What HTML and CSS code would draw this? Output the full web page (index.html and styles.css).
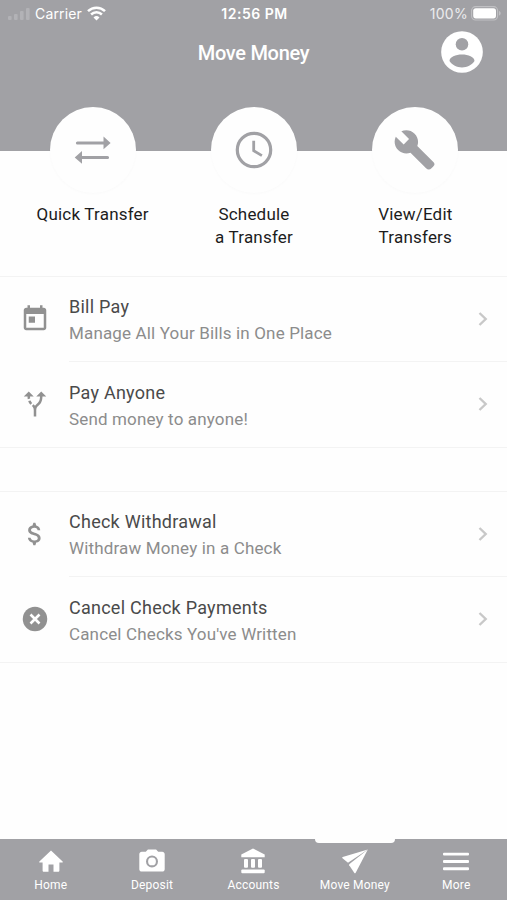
FILE: index.html
```
<!DOCTYPE html>
<html lang="en">
<head>
    <meta charset="UTF-8">
    <meta name="viewport" content="width=device-width, initial-scale=1.0">
    <title>Move Money</title>
    <link rel="stylesheet" href="styles.css">
</head>
<body>
    <div class="app">
        <header class="header">
            <div class="status-bar">
                <div class="status-left">
                    <svg class="signal" width="22" height="14" viewBox="0 0 22 14">
                        <rect x="0" y="9" width="3.6" height="4" rx="1"/>
                        <rect x="6" y="7" width="3.6" height="6" rx="1"/>
                        <rect x="12" y="4" width="3.6" height="9" rx="1"/>
                        <rect x="18" y="1" width="3.6" height="12" rx="1"/>
                    </svg>
                    <span class="carrier">Carrier</span>
                    <svg width="19" height="15" viewBox="0 0 19 15" fill="none" stroke="#fff" stroke-width="2.5">
                        <path d="M1 5.1a12.2 12.2 0 0 1 17 0"/>
                        <path d="M4.1 8.5a7.7 7.7 0 0 1 10.8 0"/>
                        <path d="M9.5 14.4L6.5 11.4a4.3 4.3 0 0 1 6 0z" fill="#fff" stroke="none"/>
                    </svg>
                </div>
                <div class="time">12:56 PM</div>
                <div class="status-right">
                    <span class="percent">100%</span>
                    <svg width="30" height="15" viewBox="0 0 30 15">
                        <rect x=".6" y=".6" width="26" height="13.4" rx="4" fill="none" stroke="#c0c0c3" stroke-width="1.1"/>
                        <rect x="2.2" y="2.2" width="22.8" height="10.2" rx="2.6" fill="#fff"/>
                        <path d="M28 5v4.6c1-.4 1.7-1.2 1.7-2.3S29 5.4 28 5z" fill="#c0c0c3"/>
                    </svg>
                </div>
            </div>
            <div class="title-bar">
                <h1>Move Money</h1>
                <svg class="profile" width="50" height="50" viewBox="0 0 24 24">
                    <circle cx="12" cy="12" r="10" fill="#fff"/>
                    <circle cx="12" cy="8.3" r="3" fill="#a1a1a5"/>
                    <path d="M12 13.2c-3 0-6 1.3-6 3.1 1.3 1.9 3.5 3.1 6 3.1s4.7-1.2 6-3.1c0-1.8-3-3.1-6-3.1z" fill="#a1a1a5"/>
                </svg>
            </div>
        </header>

        <nav class="actions">
            <a class="action">
                <span class="action-circle">
                    <svg width="38" height="28" viewBox="0 0 38 28" fill="#a1a1a5">
                        <path d="M3.500 5.400h26V.4L36.600 6.900l-7.100 6.400V8.600H3.500a1.600 1.600 0 0 1 0-3.200z"/>
                        <path d="M33.500 19.900H8v-4.900L.7 21.400 8 27.800v-4.700h25.500a1.600 1.600 0 0 0 0-3.200z"/>
                    </svg>
                </span>
                <span class="action-label">Quick Transfer</span>
            </a>
            <a class="action">
                <span class="action-circle">
                    <svg width="38" height="38" viewBox="0 0 38 38" fill="none" stroke="#a1a1a5">
                        <circle cx="19" cy="19" r="16.7" stroke-width="3.2"/>
                        <path d="M18.7 9.8v10l8.2 4.8" stroke-width="2.8"/>
                    </svg>
                </span>
                <span class="action-label">Schedule<br>a Transfer</span>
            </a>
            <a class="action">
                <span class="action-circle">
                    <svg width="43" height="43" viewBox="0.6 0.4 24 24" fill="#a1a1a5">
                        <path d="M22.7 19l-9.1-9.1c.9-2.3.4-5-1.5-6.900-2-2-5-2.400-7.400-1.300L9 6 6 9 1.600 4.700C.4 7.100.9 10.100 2.900 12.100c1.900 1.900 4.600 2.400 6.900 1.500l8.700 8.700c.9.9 2.100.9 3 0l1-1c.9-.8.9-1.600.2-2.300z"/>
                    </svg>
                </span>
                <span class="action-label">View/Edit<br>Transfers</span>
            </a>
        </nav>

        <main>
            <section class="list">
                <a class="row">
                    <svg class="row-icon" width="30" height="30" viewBox="0 0 24 24">
                        <path d="M19 3h-1V1h-2v2H8V1H6v2H5c-1.110 0-1.990.9-1.990 2L3 19c0 1.100.89 2 2 2h14c1.100 0 2-.9 2-2V5c0-1.100-.9-2-2-2zm0 16H5V8h14v11zM7 10h5v5H7v-5z"/>
                    </svg>
                    <div class="row-body">
                        <div class="row-text">
                            <div class="row-title">Bill Pay</div>
                            <div class="row-sub">Manage All Your Bills in One Place</div>
                        </div>
                        <svg class="chevron" width="10" height="16" viewBox="0 0 10 16"><path d="M1.500 2l6.200 6-6.200 6"/></svg>
                    </div>
                </a>
                <a class="row">
                    <svg class="row-icon" width="30" height="30" viewBox="0 0 24 24">
                        <path d="M9.780 11.160l-1.420 1.420c-.68-.69-1.340-1.580-1.790-2.940l1.940-.49c.32.89.77 1.500 1.270 2.010zM11 6L7 2 3 6h3.020c.02.81.08 1.540.19 2.170l1.940-.49C8.080 7.200 8.030 6.630 8.020 6H11zm10 0l-4-4-4 4h2.990c-.1 3.680-1.280 4.750-2.540 5.880-.5.44-1.010.92-1.450 1.550-.34-.49-.73-.88-1.130-1.240L9.460 13.600c.93.85 1.540 1.540 1.540 3.400v5h2v-5c0-2.020.71-2.660 1.790-3.630 1.380-1.240 3.080-2.780 3.200-7.370H21z"/>
                    </svg>
                    <div class="row-body">
                        <div class="row-text">
                            <div class="row-title">Pay Anyone</div>
                            <div class="row-sub">Send money to anyone!</div>
                        </div>
                        <svg class="chevron" width="10" height="16" viewBox="0 0 10 16"><path d="M1.500 2l6.200 6-6.200 6"/></svg>
                    </div>
                </a>
            </section>

            <section class="list">
                <a class="row">
                    <svg class="row-icon" width="30" height="30" viewBox="0 0 24 24">
                        <path d="M11.800 10.900c-2.270-.59-3-1.200-3-2.150 0-1.090 1.010-1.850 2.700-1.850 1.780 0 2.440.85 2.500 2.100h2.210c-.07-1.720-1.120-3.300-3.210-3.810L12.300 3h-1.600L10 5.160c-1.940.42-3.500 1.680-3.500 3.610 0 2.310 1.910 3.460 4.700 4.130 2.500.6 3 1.480 3 2.410 0 .69-.49 1.790-2.700 1.790-2.060 0-2.870-.92-2.980-2.100h-2.200c.12 2.190 1.760 3.420 3.680 3.830L10.700 21h1.600l.7-2.150c1.950-.37 3.500-1.500 3.500-3.550 0-2.840-2.430-3.810-4.700-4.400z"/>
                    </svg>
                    <div class="row-body">
                        <div class="row-text">
                            <div class="row-title">Check Withdrawal</div>
                            <div class="row-sub">Withdraw Money in a Check</div>
                        </div>
                        <svg class="chevron" width="10" height="16" viewBox="0 0 10 16"><path d="M1.500 2l6.200 6-6.200 6"/></svg>
                    </div>
                </a>
                <a class="row">
                    <svg class="row-icon" width="30" height="30" viewBox="0 0 24 24">
                        <circle cx="12" cy="12" r="9.800"/>
                        <path d="M8.400 8.400l7.200 7.200M15.600 8.400l-7.200 7.200" stroke="#fff" stroke-width="2.100"/>
                    </svg>
                    <div class="row-body">
                        <div class="row-text">
                            <div class="row-title">Cancel Check Payments</div>
                            <div class="row-sub">Cancel Checks You've Written</div>
                        </div>
                        <svg class="chevron" width="10" height="16" viewBox="0 0 10 16"><path d="M1.500 2l6.200 6-6.200 6"/></svg>
                    </div>
                </a>
            </section>
        </main>

        <nav class="tab-bar">
            <a class="tab">
                <svg width="28" height="28" viewBox="0 0 28 28">
                    <path d="M14 3.500L2.400 14.600c-.4.500-.2 1 .4 1H5.600v7.900c0 .8.500 1.300 1.300 1.300h4.600v-7.200h5v7.200h4.600c.8 0 1.300-.5 1.300-1.300v-7.900h2.800c.6 0 .8-.5.4-1z"/>
                </svg>
                <span>Home</span>
            </a>
            <a class="tab">
                <svg width="28" height="28" viewBox="0 0 28 28">
                    <path fill-rule="evenodd" d="M9.900 2.500h8.200l2.100 2.300h4c1.400 0 2.500 1 2.500 2.400v15c0 1.400-1.100 2.400-2.500 2.400H3.800c-1.400 0-2.500-1-2.500-2.400v-15c0-1.400 1.100-2.400 2.500-2.400h4zM14 8.400a6 6 0 1 0 0 12 6 6 0 0 0 0-12zm0 2.100a3.900 3.900 0 1 1 0 7.800 3.900 3.900 0 0 1 0-7.800z"/>
                </svg>
                <span>Deposit</span>
            </a>
            <a class="tab">
                <svg width="28" height="28" viewBox="0 0 28 28">
                    <path d="M14 1.500L2.300 7.500v2.800h23.400V7.500z"/>
                    <rect x="5" y="12" width="4" height="8.800" rx="1"/>
                    <rect x="12" y="12" width="4" height="8.800" rx="1"/>
                    <rect x="19" y="12" width="4" height="8.800" rx="1"/>
                    <rect x="2.300" y="22.500" width="23.400" height="3.700" rx="1"/>
                </svg>
                <span>Accounts</span>
            </a>
            <a class="tab active">
                <svg width="28" height="28" viewBox="0 0 28 28">
                    <path d="M26.800 2.600L1.700 10.100c-.6.200-.7.700-.2 1.100l5.500 4.500z"/>
                    <path d="M26.800 2.600L8.200 17.200v1.100l5 7.500c.5.700 1.100.7 1.500 0z"/>
                </svg>
                <span>Move Money</span>
            </a>
            <a class="tab">
                <svg width="28" height="28" viewBox="0 0 28 28">
                    <rect x="1" y="5.700" width="26" height="2.900" rx="1"/>
                    <rect x="1" y="13" width="26" height="2.900" rx="1"/>
                    <rect x="1" y="20.300" width="26" height="2.900" rx="1"/>
                </svg>
                <span>More</span>
            </a>
        </nav>
    </div>
</body>
</html>
```
FILE: styles.css
```
* {
    box-sizing: border-box;
}
body {
    font-family: Roboto, "Liberation Sans", sans-serif;
    margin: 0;
    background: #fefefe;
}
.app {
    display: flex;
    flex-direction: column;
    height: 900px;
}
.header {
    height: 151px;
    background: #a1a1a5;
    color: #fff;
}
.status-bar {
    display: grid;
    grid-template-columns: 1fr auto 1fr;
    align-items: center;
    height: 27px;
    padding: 0 6px 0 8px;
    font-family: Inter, sans-serif;
    font-size: 14px;
}
.status-left,
.status-right {
    display: flex;
    align-items: center;
}
.status-left {
    gap: 5px;
}
.carrier {
    letter-spacing: 0.15px;
}
.status-right {
    justify-content: flex-end;
    gap: 3px;
    color: #ececee;
}
.percent {
    letter-spacing: 0.3px;
}
.signal {
    fill: #b2b2b6;
}
.time {
    font-weight: 600;
    letter-spacing: 0.5px;
}
.title-bar {
    display: grid;
    grid-template-columns: 1fr auto 1fr;
    align-items: center;
    height: 50px;
    padding: 0 20px;
}
.title-bar h1 {
    grid-column: 2;
    margin: 2px 0 0;
    font-size: 20px;
    font-weight: 500;
    letter-spacing: -0.3px;
}
.profile {
    justify-self: end;
}
.actions {
    display: grid;
    grid-template-columns: repeat(3, 1fr);
    height: 169px;
    margin-top: -44px;
    padding: 0 11px 0 12px;
}
.action {
    display: flex;
    flex-direction: column;
    align-items: center;
    gap: 10px;
}
.action-circle {
    display: flex;
    align-items: center;
    justify-content: center;
    width: 86px;
    height: 86px;
    border-radius: 50%;
    background: #fefefe;
    box-shadow: 0 1px 3px rgba(0,0,0,0.02);
}
.action-label {
    font-size: 17px;
    line-height: 23px;
    letter-spacing: 0.2px;
    color: #1c1c1c;
    text-align: center;
}
.list {
    border-top: 1px solid #f3f3f3;
    border-bottom: 1px solid #f3f3f3;
    margin-bottom: 43px;
}
.row {
    display: flex;
    height: 85px;
    padding-left: 20px;
}
.row-icon {
    align-self: center;
    margin: 0 19px 2px 0;
    fill: #919191;
}
.row-body {
    flex: 1;
    display: flex;
    align-items: center;
    justify-content: space-between;
    padding-right: 19px;
}
.row:first-child .row-body {
    border-bottom: 1px solid #f3f3f3;
}
.row-text {
    padding-top: 2px;
}
.row-title,
.row-sub {
    line-height: 26px;
}
.row-title {
    font-size: 18px;
    letter-spacing: 0.25px;
    color: #4a4a4a;
}
.row-sub {
    font-size: 17px;
    letter-spacing: 0.15px;
    color: #8c8c8c;
}
.chevron {
    margin-bottom: 1px;
    fill: none;
    stroke: #c8c8c8;
    stroke-width: 2.4;
}
.tab-bar {
    display: grid;
    grid-template-columns: repeat(5, 1fr);
    height: 61px;
    margin-top: auto;
    background: #a1a1a5;
    color: #fff;
    font-size: 12px;
    letter-spacing: 0.2px;
}
.tab {
    position: relative;
    display: flex;
    flex-direction: column;
    align-items: center;
    padding-top: 8px;
    gap: 2px;
    line-height: 16px;
}
.tab svg {
    fill: #fff;
}
/* marker over the selected tab */
.tab.active::before {
    content: "";
    position: absolute;
    top: 0;
    width: 80px;
    height: 4px;
    border-radius: 0 0 4px 4px;
    background: #fefefe;
}
```
